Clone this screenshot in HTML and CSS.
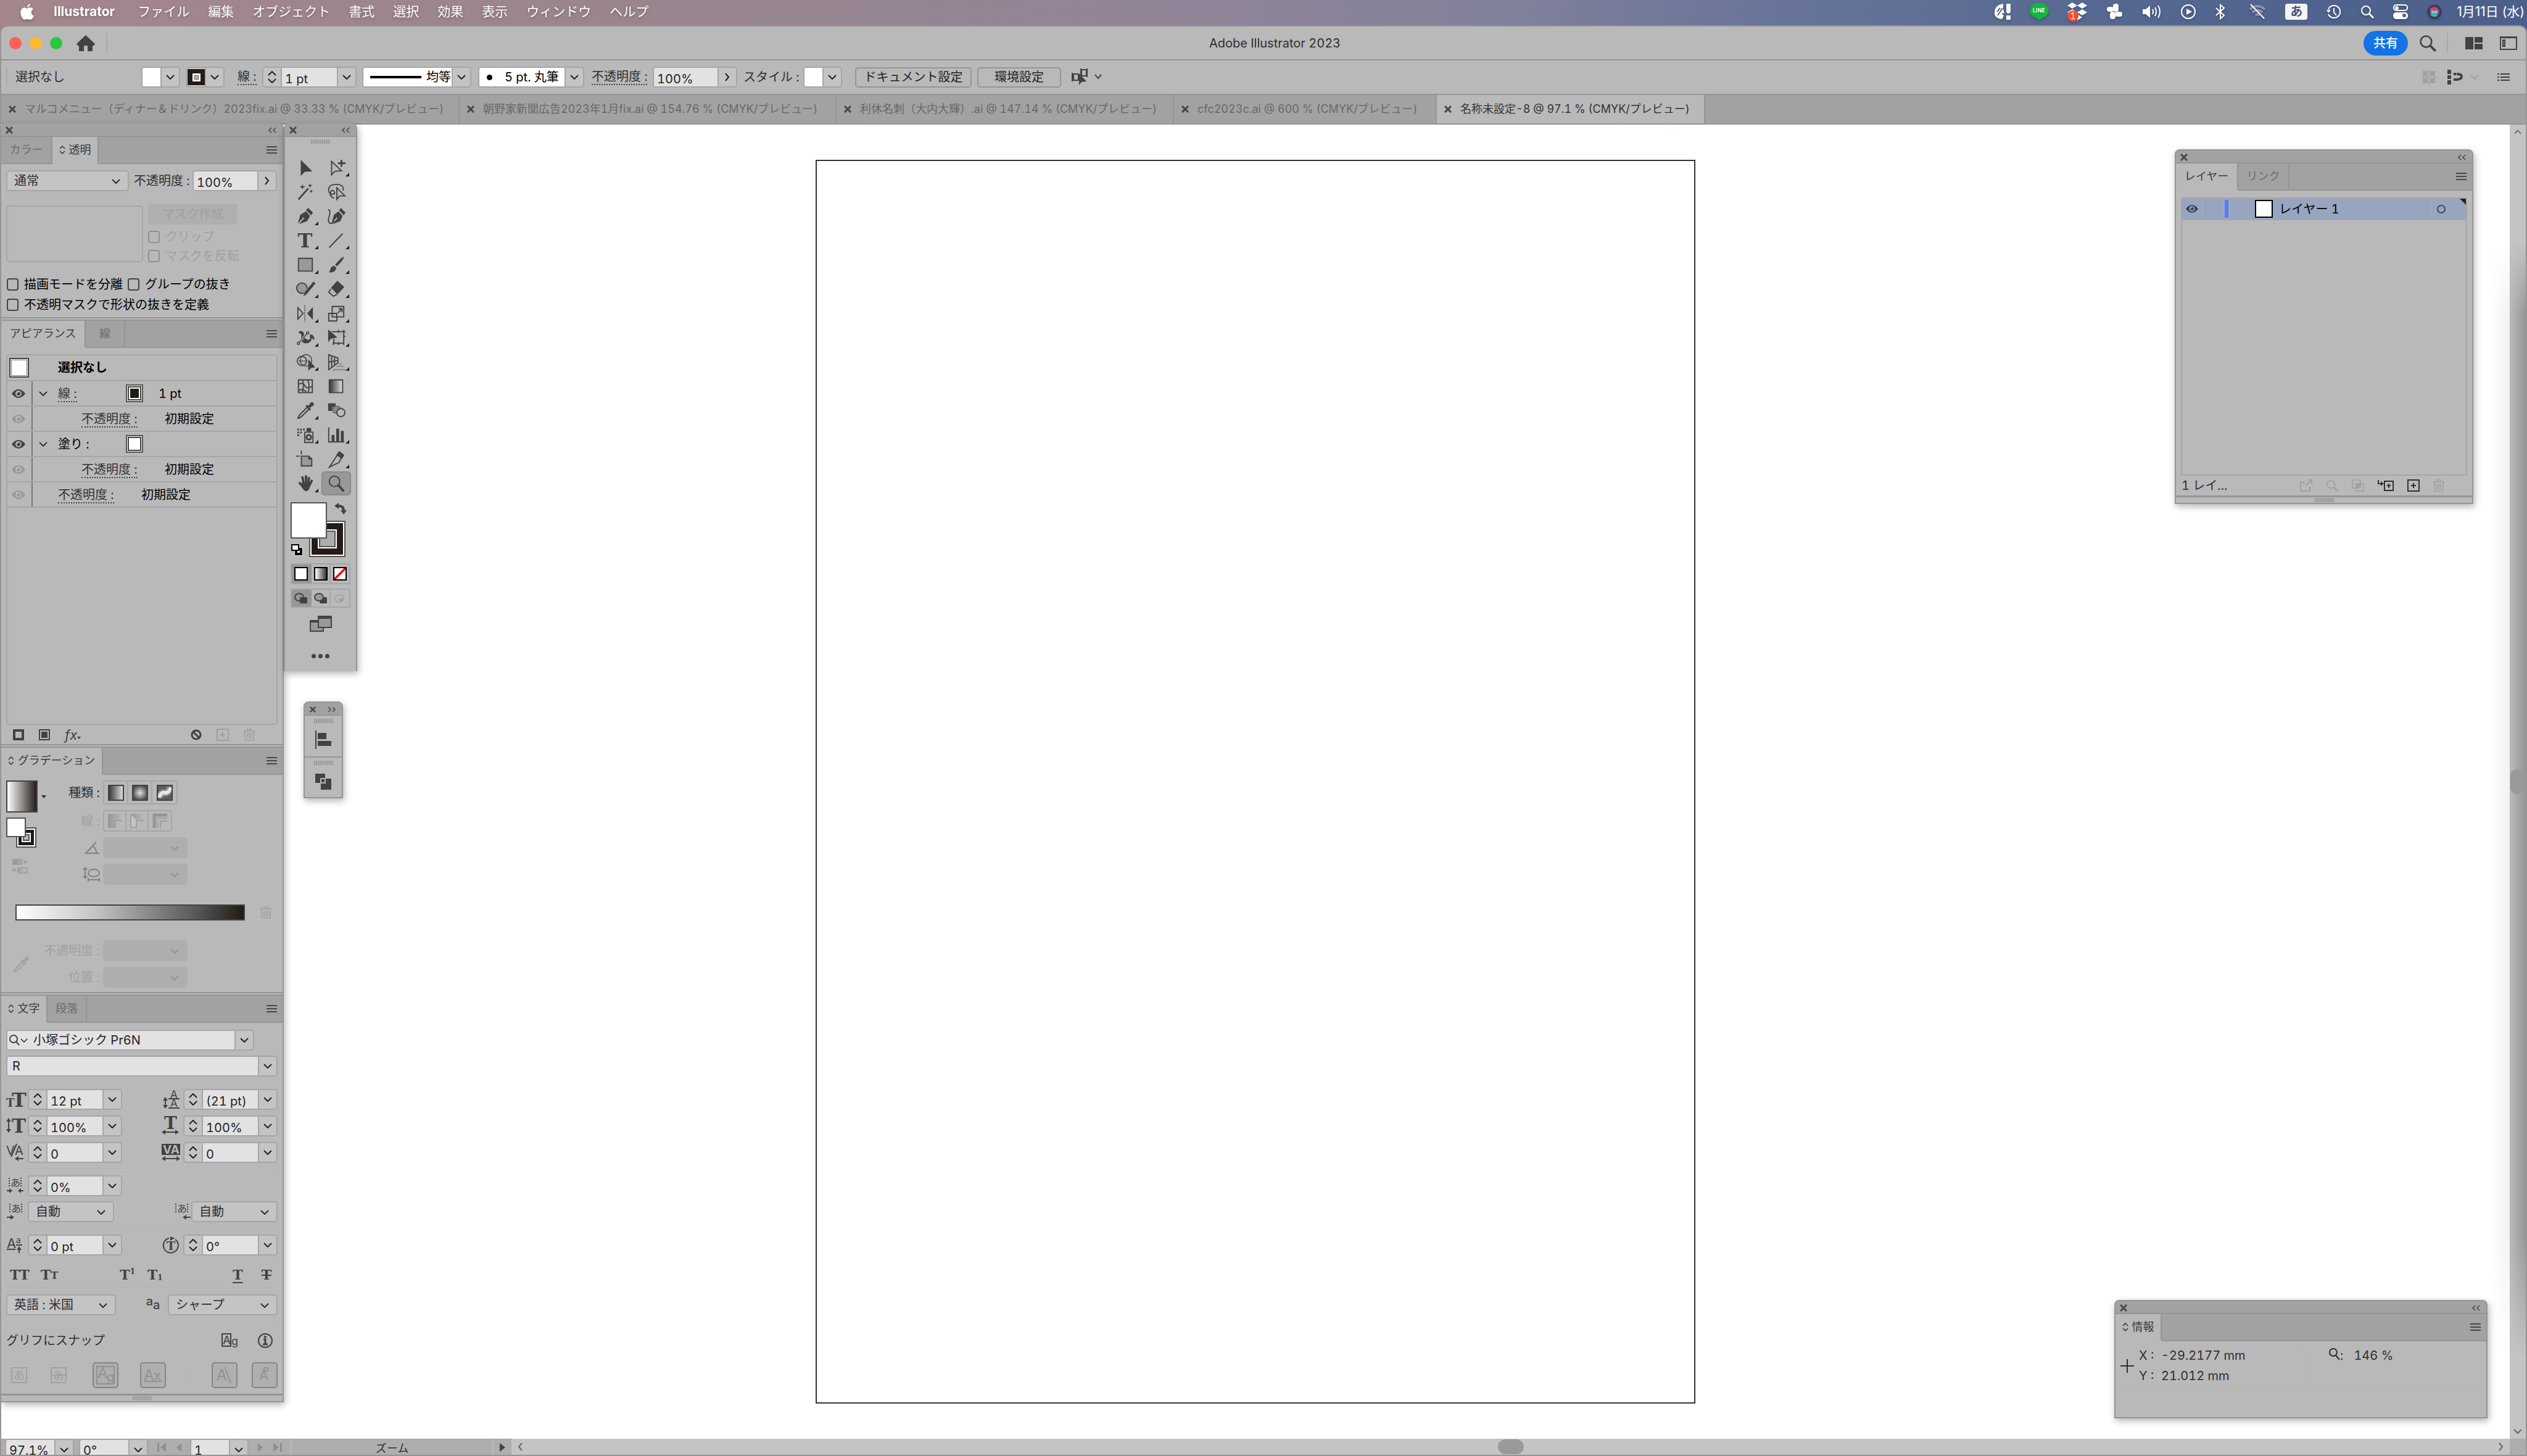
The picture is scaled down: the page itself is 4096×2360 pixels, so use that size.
FILE: index.html
```html
<!DOCTYPE html>
<html lang="ja">
<head>
<meta charset="utf-8">
<title>Adobe Illustrator 2023</title>
<link rel="stylesheet" href="styles.css">
</head>
<body>
<svg class="sprite" aria-hidden="true">
  <defs>
    <linearGradient id="g-bw"><stop offset="0" stop-color="#333"/><stop offset="1" stop-color="#e4e4e4"/></linearGradient>
    <linearGradient id="g-dim"><stop offset="0" stop-color="#969696"/><stop offset="1" stop-color="#bbb"/></linearGradient>
    <radialGradient id="g-rad"><stop offset="0" stop-color="#e2e2e2"/><stop offset="1" stop-color="#505050"/></radialGradient>
    <radialGradient id="g-siri" cx="0.5" cy="0.5"><stop offset="0" stop-color="#fff"/><stop offset="0.35" stop-color="#6fb3d8"/><stop offset="0.7" stop-color="#6a3f72"/><stop offset="1" stop-color="#2b2440"/></radialGradient>
  </defs>
  <symbol id="x" viewBox="0 0 12 12"><path d="M1 1L11 11M11 1L1 11" class="s3"/></symbol>
  <symbol id="dbl-l" viewBox="0 0 14 10"><path d="M5 1L1 5L5 9M12 1L8 5L12 9" class="s1"/></symbol>
  <symbol id="dbl-r" viewBox="0 0 14 10"><path d="M2 1L6 5L2 9M9 1L13 5L9 9" class="s1"/></symbol>
  <symbol id="menu" viewBox="0 0 17 12"><path d="M0 1H17M0 6H17M0 11H17" class="s2"/></symbol>
  <symbol id="down" viewBox="0 0 14 8"><path d="M1 1L7 7L13 1" class="s2"/></symbol>
  <symbol id="up" viewBox="0 0 14 8"><path d="M1 7L7 1L13 7" class="s2"/></symbol>
  <symbol id="right" viewBox="0 0 8 14"><path d="M1 1L6 7L1 13" class="s2"/></symbol>
  <symbol id="left" viewBox="0 0 8 14"><path d="M7 1L2 7L7 13" class="s2"/></symbol>
  <symbol id="updown" viewBox="0 0 10 14"><path d="M1 5L5 1L9 5M1 9L5 13L9 9" class="s1"/></symbol>
  <symbol id="eye" viewBox="0 0 22 14"><path fill="currentColor" fill-rule="evenodd" d="M0 7Q5 0 11 0T22 7Q17 14 11 14T0 7ZM11 2A5 5 0 1 0 11 12A5 5 0 1 0 11 2ZM11 4A3 3 0 1 1 11 10A3 3 0 0 1 8 7Q10 7 11 4Z"/></symbol>
  <symbol id="trash" viewBox="0 0 18 20"><path d="M0 4H18M6 4V1H12V4M2 4V17Q2 19 4 19H14Q16 19 16 17V4M6 7V16M9 7V16M12 7V16" class="s1"/></symbol>
  <symbol id="plusbox" viewBox="0 0 20 20"><path d="M1 1H19V19H1ZM10 6V14M6 10H14" class="s2"/></symbol>
  <symbol id="glass" viewBox="0 0 22 22"><circle cx="9" cy="9" r="7" class="s2"/><path d="M14 14L21 21" class="s3"/></symbol>
  <symbol id="dropper" viewBox="0 0 30 30"><path d="M18 10L6 22Q4 24 3 28Q7 27 9 25L21 13" class="s2"/><path fill="currentColor" d="M15 8L18 6L20 8L23 3Q26 0 28 3T27 8L22 11L24 13L22 16Z"/></symbol>
  <symbol id="curve-arrow" viewBox="0 0 20 20"><path d="M5 5Q15 4 15 13" fill="none" stroke="currentColor" stroke-width="4"/><path fill="currentColor" d="M0 5L7 0V10ZM10 12H20L15 19Z"/></symbol>
</svg>

<header class="menubar">
  <svg width="24" height="28" viewBox="0 0 24 28" class="apple"><path fill="#fff" d="M17 1Q17 5 12 7Q12 3 17 1ZM12 9Q14 7 17 7Q20 7 22 10Q18 12 19 16Q19 19 23 21Q20 27 17 27Q14 26 12 26T8 27Q5 27 2 20Q0 11 5 8Q8 6 12 9Z"/></svg>
  <nav class="menus">
    <a href="#" class="app">Illustrator</a><a href="#">ファイル</a><a href="#">編集</a><a href="#">オブジェクト</a><a href="#">書式</a><a href="#">選択</a><a href="#">効果</a><a href="#">表示</a><a href="#">ウィンドウ</a><a href="#">ヘルプ</a>
  </nav>
  <div class="extras">
    <svg width="28" height="28" viewBox="0 0 28 28"><path fill="#fff" d="M15 1Q2 3 1 14T13 26L16 20L12 17L17 16L15 10ZM20 1H27V13Q26 17 24 17Q20 17 20 13ZM20 20H27V27H20Z"/><path d="M14 8L6 20M10 8L5 14" stroke="#52648d" stroke-width="2"/></svg>
    <svg width="30" height="30" viewBox="0 0 30 30"><path fill="#12b73c" d="M15 1A13 12 0 0 1 20 25L15 29L11 25A13 12 0 0 1 15 1Z"/><text x="15" y="16" class="line-txt">LINE</text></svg>
    <svg width="34" height="32" viewBox="0 0 34 32"><path fill="#fff" d="M9 1L17 6L9 11L1 6ZM25 1L33 6L25 11L17 6ZM9 12L17 17L9 22L1 17ZM25 12L33 17L25 22L17 17ZM17 20L25 25L17 30Z"/><circle cx="10" cy="23" r="9" fill="#fb4a2c"/><text x="10" y="28" class="badge-txt">1</text></svg>
    <svg width="28" height="28" viewBox="0 0 28 28"><g fill="#fff"><rect x="11" y="1" width="9" height="13" rx="4"/><rect x="1" y="6" width="11" height="8" rx="4"/><rect x="14" y="14" width="12" height="8" rx="4"/><rect x="6" y="14" width="9" height="12" rx="4"/></g></svg>
    <svg width="32" height="24" viewBox="0 0 32 24"><path fill="#fff" d="M1 8H6L13 2V22L6 16H1Z"/><path d="M17 8Q19 12 17 16M21 5Q25 12 21 19M26 2Q32 12 26 22" fill="none" stroke="#fff" stroke-width="2"/></svg>
    <svg width="26" height="26" viewBox="0 0 26 26"><circle cx="13" cy="13" r="11" fill="none" stroke="#fff" stroke-width="2"/><path fill="#fff" d="M10 8L19 13L10 18Z"/></svg>
    <svg width="18" height="26" viewBox="0 0 18 26"><path d="M2 7L15 19L9 24V2L15 7L2 19" fill="none" stroke="#fff" stroke-width="2"/></svg>
    <svg width="30" height="26" viewBox="0 0 30 26" class="wifi"><path d="M3 9Q15 -1 27 9M7 14Q15 7 23 14M12 19Q15 15 18 19" fill="none" stroke="#8793b0" stroke-width="4"/><path d="M4 1L26 24" stroke="#fff" stroke-width="2"/></svg>
    <span class="ime">あ</span>
    <svg width="26" height="26" viewBox="0 0 26 26"><path d="M4 9A10 10 0 1 1 4 17M13 7V14L17 19" fill="none" stroke="#fff" stroke-width="2"/><path fill="#fff" d="M1 10H8L4 15Z"/></svg>
    <svg width="22" height="24" viewBox="0 0 22 24"><circle cx="9" cy="10" r="7" fill="none" stroke="#fff" stroke-width="2"/><path d="M14 15L21 22" stroke="#fff" stroke-width="3"/></svg>
    <svg width="26" height="26" viewBox="0 0 26 26"><rect x="2" y="2" width="22" height="9" rx="4" fill="none" stroke="#fff" stroke-width="2"/><circle cx="7" cy="7" r="3" fill="#fff"/><rect x="1" y="14" width="24" height="11" rx="5" fill="#fff"/><circle cx="19" cy="19" r="3" fill="#52648d"/></svg>
    <svg width="24" height="24" viewBox="0 0 24 24"><circle cx="12" cy="12" r="11" fill="url(#g-siri)"/><path d="M4 7Q12 2 18 8L12 12Z" fill="#d9426b"/><path d="M5 17Q10 22 17 19L12 12Z" fill="#2fc0a0"/></svg>
    <time>1月11日 (水)</time>
  </div>
</header>

<div class="window">
  <div class="titlebar">
    <div class="tb-left">
      <button class="light red" aria-label="閉じる"></button><button class="light yellow" aria-label="しまう"></button><button class="light green" aria-label="拡大"></button>
      <button class="home" aria-label="ホーム"><svg width="30" height="26" viewBox="0 0 30 26"><path fill="currentColor" d="M15 0L30 14L28 17H26V26H18V17H12V26H4V17H2L0 14Z"/></svg></button>
      <i class="vbar"></i>
    </div>
    <h1>Adobe Illustrator 2023</h1>
    <div class="tb-right">
      <button class="share">共有</button>
      <button class="plain" aria-label="検索"><svg width="28" height="28"><use href="#glass"/></svg></button>
      <i class="vbar"></i>
      <button class="plain layout" aria-label="ワークスペース"><svg width="28" height="20" viewBox="0 0 28 20"><path fill="currentColor" d="M0 0H13V20H0ZM15 0H28V9H15ZM15 11H28V20H15Z"/></svg></button>
      <button class="plain" aria-label="パネル"><svg width="28" height="22" viewBox="0 0 28 22"><path d="M1 2H27V21H1Z" class="s2"/><path fill="currentColor" d="M0 0H28V3H0ZM4 5H9V17H4Z"/><path d="M5 9H8M5 13H8" stroke="#b9b9b9"/></svg></button>
    </div>
  </div>

  <div class="control">
    <i class="dots"></i>
    <span class="selstate">選択なし</span>
    <button class="combo sw" aria-label="塗り"><span class="paper"></span><span class="dd"><svg width="14" height="8"><use href="#down"/></svg></span></button>
    <button class="combo sw" aria-label="線の色"><span class="ink"><i></i></span><span class="dd"><svg width="14" height="8"><use href="#down"/></svg></span></button>
    <label class="dotted c-stroke" for="c-w">線 :</label>
    <div class="combo w153"><span class="step"><button aria-label="増"><svg width="14" height="8"><use href="#up"/></svg></button><button aria-label="減"><svg width="14" height="8"><use href="#down"/></svg></button></span><input id="c-w" value="1 pt"><button class="dd" aria-label="一覧"><svg width="14" height="8"><use href="#down"/></svg></button></div>
    <button class="combo profile"><span class="paper"><i class="rule"></i>均等</span><span class="dd"><svg width="14" height="8"><use href="#down"/></svg></span></button>
    <button class="combo brush"><span class="paper"><i class="dot"></i>5 pt. 丸筆</span><span class="dd"><svg width="14" height="8"><use href="#down"/></svg></span></button>
    <label class="dotted c-opacity" for="c-o">不透明度 :</label>
    <div class="combo w137"><input id="c-o" value="100%"><button class="dd" aria-label="開く"><svg width="8" height="14"><use href="#right"/></svg></button></div>
    <span class="c-style">スタイル :</span>
    <button class="combo sw" aria-label="スタイル"><span class="paper"></span><span class="dd"><svg width="14" height="8"><use href="#down"/></svg></span></button>
    <button class="outline docset">ドキュメント設定</button>
    <button class="outline prefs">環境設定</button>
    <button class="plain pick" aria-label="類似オブジェクト"><svg width="52" height="28" viewBox="0 0 52 28"><path d="M3 9H11V19H3ZM16 2H24V12H16ZM1 7V21M15 0V14M25 0V14" class="s2"/><path fill="currentColor" d="M12 8V27L16 22L24 21Z"/><path d="M38 10L43 16L48 10" class="s2"/></svg></button>
    <div class="c-right">
      <svg width="26" height="26" viewBox="0 0 26 26" class="dim"><path fill="currentColor" d="M3 3H11V11H3ZM15 3H23V11H15ZM3 15H11V23H3ZM15 15H23V23H15Z"/><path d="M13 0V26M0 13H26" class="s1"/></svg>
      <svg width="26" height="24" viewBox="0 0 26 24" class="magnet"><path fill="currentColor" d="M0 0H6V7H0ZM0 9H6V15H0ZM0 17H6V24H0Z"/><path d="M10 7H16Q23 7 23 11T16 16H10" fill="none" stroke="currentColor" stroke-width="4" stroke-dasharray="4 1 40"/></svg>
      <svg width="14" height="8" class="dim more-dd"><use href="#down"/></svg>
      <svg width="20" height="14" viewBox="0 0 20 14" class="lines"><path d="M0 2H3M5 2H20M0 7H3M5 7H20M0 12H3M5 12H20" class="s2"/></svg>
    </div>
  </div>

  <nav class="doctabs">
    <a href="#" class="t1"><svg width="12" height="12"><use href="#x"/></svg>マルコメニュー（ディナー＆ドリンク）2023fix.ai @ 33.33 % (CMYK/プレビュー)</a>
    <a href="#" class="t2"><svg width="12" height="12"><use href="#x"/></svg>朝野家新聞広告2023年1月fix.ai @ 154.76 % (CMYK/プレビュー)</a>
    <a href="#" class="t3"><svg width="12" height="12"><use href="#x"/></svg>利休名刺（大内大輝）.ai @ 147.14 % (CMYK/プレビュー)</a>
    <a href="#" class="t4"><svg width="12" height="12"><use href="#x"/></svg>cfc2023c.ai @ 600 % (CMYK/プレビュー)</a>
    <a href="#" class="t5 on"><svg width="12" height="12"><use href="#x"/></svg>名称未設定-8 @ 97.1 % (CMYK/プレビュー)</a>
  </nav>

  <main class="workspace">
    <div class="canvas"><div class="artboard"></div></div>
    <div class="vscroll"><svg width="12" height="8"><use href="#up"/></svg><i></i><svg width="14" height="8"><use href="#down"/></svg></div>
    <div class="edge"></div>

    <aside class="panel dock">
      <div class="pbar"><button aria-label="閉じる"><svg width="12" height="12"><use href="#x"/></svg></button><button aria-label="折りたたむ"><svg width="14" height="10"><use href="#dbl-l"/></svg></button></div>
      <section class="sec first">
        <div class="tabs"><button class="tab-m">カラー</button><button class="on tab-i"><svg width="10" height="14"><use href="#updown"/></svg>透明</button><span class="fill"><svg width="17" height="12"><use href="#menu"/></svg></span></div>
        <div class="body transp">
          <div class="row">
            <span class="select w199"><select aria-label="描画モード"><option>通常</option></select><svg width="14" height="8"><use href="#down"/></svg></span>
            <label class="oplab" for="t-o">不透明度 :</label>
            <div class="combo w137"><input id="t-o" value="100%"><button class="dd" aria-label="開く"><svg width="8" height="14"><use href="#right"/></svg></button></div>
          </div>
          <hr>
          <div class="mask">
            <div class="preview"></div>
            <div class="maskcol">
              <button class="flat" disabled>マスク作成</button>
              <label class="chk off"><input type="checkbox" disabled>クリップ</label>
              <label class="chk off"><input type="checkbox" disabled>マスクを反転</label>
            </div>
          </div>
          <hr>
          <div class="checks"><label class="chk"><input type="checkbox">描画モードを分離</label><label class="chk"><input type="checkbox">グループの抜き</label></div>
          <div class="checks"><label class="chk"><input type="checkbox">不透明マスクで形状の抜きを定義</label></div>
        </div>
      </section>

      <section class="sec">
        <div class="tabs"><button class="on tab-l">アピアランス</button><button class="tab-s">線</button><span class="fill"><svg width="17" height="12"><use href="#menu"/></svg></span></div>
        <div class="body appear">
          <ul class="alist">
            <li class="head"><span class="thumb"><i></i></span><b>選択なし</b></li>
            <li><span class="eye"><svg width="22" height="14"><use href="#eye"/></svg></span><span class="tw"><svg width="14" height="8"><use href="#down"/></svg></span><span class="lab"><a href="#" class="dotted">線 :</a></span><span class="chip black"></span><span class="val">1 pt</span></li>
            <li><span class="eye pale"><svg width="22" height="14"><use href="#eye"/></svg></span><span class="tw deep"></span><span class="lab2"><a href="#" class="dotted">不透明度 :</a></span>初期設定</li>
            <li><span class="eye"><svg width="22" height="14"><use href="#eye"/></svg></span><span class="tw"><svg width="14" height="8"><use href="#down"/></svg></span><span class="lab">塗り :</span><span class="chip"></span></li>
            <li><span class="eye pale"><svg width="22" height="14"><use href="#eye"/></svg></span><span class="tw deep"></span><span class="lab2"><a href="#" class="dotted">不透明度 :</a></span>初期設定</li>
            <li><span class="eye pale"><svg width="22" height="14"><use href="#eye"/></svg></span><span class="tw"></span><span class="lab2"><a href="#" class="dotted">不透明度 :</a></span>初期設定</li>
          </ul>
          <div class="afoot">
            <button class="plain" aria-label="新規線"><svg width="18" height="18" viewBox="0 0 18 18"><path d="M2 2H16V16H2Z" fill="none" stroke="currentColor" stroke-width="4"/></svg></button>
            <button class="plain" aria-label="新規塗り"><svg width="18" height="18" viewBox="0 0 18 18"><path d="M1 1H17V17H1Z" class="s2"/><path d="M4 4H14V14H4Z" fill="currentColor"/></svg></button>
            <button class="plain fx">fx<i></i></button>
            <button class="plain push" aria-label="消去"><svg width="18" height="18" viewBox="0 0 18 18"><circle cx="9" cy="9" r="7" class="s3"/><path d="M4 4L14 14" class="s3"/></svg></button>
            <button class="plain dim" aria-label="複製"><svg width="20" height="20"><use href="#plusbox"/></svg></button>
            <button class="plain dim" aria-label="削除"><svg width="18" height="20"><use href="#trash"/></svg></button>
          </div>
        </div>
      </section>

      <section class="sec">
        <div class="tabs"><button class="on tab-xl"><svg width="10" height="14"><use href="#updown"/></svg>グラデーション</button><span class="fill"><svg width="17" height="12"><use href="#menu"/></svg></span></div>
        <div class="body grad">
          <div class="gtop">
            <div class="gleft">
              <div class="row"><span class="gsw"></span><i class="tri"></i></div>
              <div class="fs"><span class="fs-stroke"></span><span class="fs-fill"></span></div>
              <svg width="28" height="24" viewBox="0 0 28 24" class="dim"><path d="M3 1H17V9H3ZM11 15H26V23H11Z" fill="url(#g-dim)" stroke="currentColor" stroke-width="2"/><path fill="currentColor" d="M19 3H28L23 9ZM0 20H9L5 14Z"/></svg>
            </div>
            <div class="gright">
              <div class="grow"><span class="glab">種類 :</span><div class="seg big">
                <button aria-label="線形"><svg width="26" height="26" viewBox="0 0 26 26"><path d="M1 1H25V25H1Z" fill="url(#g-bw)" stroke="#424242" stroke-width="2"/></svg></button>
                <button aria-label="円形"><svg width="26" height="26" viewBox="0 0 26 26"><path d="M1 1H25V25H1Z" fill="url(#g-rad)" stroke="#424242" stroke-width="2"/></svg></button>
                <button aria-label="フリー"><svg width="26" height="26" viewBox="0 0 26 26"><path d="M1 1H25V25H1Z" fill="#5c5c5c"/><path d="M6 17Q8 12 13 13T20 8" fill="none" stroke="#8d8d8d" stroke-width="11" stroke-linecap="round"/><path d="M5 18Q8 12 13 13T22 7" fill="none" stroke="#e6e6e6" stroke-width="6" stroke-linecap="round"/><path d="M1 1H25V25H1Z" fill="none" stroke="#424242" stroke-width="2"/></svg></button></div></div>
              <div class="grow"><span class="glab off">線 :</span><div class="seg">
                <button disabled aria-label="線1"><svg width="23" height="23" viewBox="0 0 23 23"><path d="M0 0H23V11H12V23H0Z" fill="url(#g-dim)"/><path d="M23 11H12V23" fill="none" stroke="#a0a0a0" stroke-width="2"/></svg></button>
                <button disabled aria-label="線2"><svg width="23" height="23" viewBox="0 0 23 23"><path d="M0 0H23V11H11Z" fill="url(#g-dim)"/><path d="M0 1V23H11V11Z" fill="#c4c4c4"/><path d="M1 2V22H10V11H23" fill="none" stroke="#a0a0a0" stroke-width="2"/></svg></button>
                <button disabled aria-label="線3"><svg width="23" height="23" viewBox="0 0 23 23"><path d="M2 23V2H23" fill="none" stroke="#969696" stroke-width="5"/><path d="M7 23V7H23" fill="none" stroke="#a9a9a9" stroke-width="3"/><path d="M12 23V12H23" fill="none" stroke="#a0a0a0" stroke-width="2"/></svg></button></div></div>
              <div class="grow"><span class="glab mid"><svg width="24" height="20" viewBox="0 0 24 20"><path d="M18 1L1 19H23M12 7Q18 11 18 18" class="s2"/></svg></span><span class="select void"><select disabled aria-label="角度"></select><svg width="14" height="8"><use href="#down"/></svg></span></div>
              <div class="grow"><span class="glab mid"><svg width="28" height="24" viewBox="0 0 28 24"><path d="M4 3V17M9 21H27M9 18V24M27 18V24" class="s2"/><ellipse cx="18" cy="10" rx="9" ry="6" class="s2"/><path fill="currentColor" d="M0 5L4 0L8 5ZM0 15H8L4 20Z"/></svg></span><span class="select void"><select disabled aria-label="縦横比"></select><svg width="14" height="8"><use href="#down"/></svg></span></div>
            </div>
          </div>
          <div class="gbarrow"><div class="gbar"></div><svg width="18" height="20" class="dim"><use href="#trash"/></svg></div>
          <div class="gbot">
            <svg width="28" height="28" class="dim"><use href="#dropper"/></svg>
            <div class="gright">
              <div class="grow"><label class="glab off" for="g-o">不透明度 :</label><span class="select void"><select id="g-o" disabled></select><svg width="14" height="8"><use href="#down"/></svg></span></div>
              <div class="grow"><label class="glab off" for="g-p">位置 :</label><span class="select void"><select id="g-p" disabled></select><svg width="14" height="8"><use href="#down"/></svg></span></div>
            </div>
          </div>
        </div>
      </section>

      <section class="sec last">
        <div class="tabs"><button class="on tab-i"><svg width="10" height="14"><use href="#updown"/></svg>文字</button><button class="tab-s">段落</button><span class="fill"><svg width="17" height="12"><use href="#menu"/></svg></span></div>
        <div class="body chars">
          <div class="combo font"><span class="find"><svg width="18" height="20" viewBox="0 0 18 20"><circle cx="8" cy="8" r="6" class="s2"/><path d="M12 12L17 18" class="s2"/></svg><svg width="12" height="7" viewBox="0 0 14 8"><path d="M1 1L7 7L13 1" class="s2"/></svg></span><input aria-label="フォント" value="小塚ゴシック Pr6N"><button class="dd" aria-label="一覧"><svg width="14" height="8"><use href="#down"/></svg></button></div>
          <div class="combo style"><input aria-label="スタイル" value="R"><button class="dd" aria-label="一覧"><svg width="14" height="8"><use href="#down"/></svg></button></div>
          <hr>
          <div class="crow">
            <span class="ci"><svg width="30" height="26" viewBox="0 0 30 26"><text x="0" y="25" class="slab" font-size="18">T</text><text x="9" y="25" class="slab" font-size="32">T</text></svg></span>
            <div class="combo w153"><span class="step"><button aria-label="増"><svg width="14" height="8"><use href="#up"/></svg></button><button aria-label="減"><svg width="14" height="8"><use href="#down"/></svg></button></span><input aria-label="サイズ" value="12 pt"><button class="dd" aria-label="一覧"><svg width="14" height="8"><use href="#down"/></svg></button></div>
            <span class="ci r"><svg width="30" height="30" viewBox="0 0 30 30"><path d="M6 15V27M11 14H29M11 29H29" class="s2"/><path fill="currentColor" d="M2 17L6 11L10 17ZM2 24H10L6 30Z"/><text x="14" y="13" font-size="17">A</text><text x="14" y="27" font-size="17">A</text></svg></span>
            <div class="combo w153"><span class="step"><button aria-label="増"><svg width="14" height="8"><use href="#up"/></svg></button><button aria-label="減"><svg width="14" height="8"><use href="#down"/></svg></button></span><input aria-label="行送り" value="(21 pt)"><button class="dd" aria-label="一覧"><svg width="14" height="8"><use href="#down"/></svg></button></div>
          </div>
          <div class="crow">
            <span class="ci"><svg width="30" height="26" viewBox="0 0 30 26"><path d="M4 4V20" class="s2"/><path fill="currentColor" d="M0 6L4 0L8 6ZM0 18H8L4 24Z"/><text x="9" y="24" class="slab" font-size="31">T</text></svg></span>
            <div class="combo w153"><span class="step"><button aria-label="増"><svg width="14" height="8"><use href="#up"/></svg></button><button aria-label="減"><svg width="14" height="8"><use href="#down"/></svg></button></span><input aria-label="垂直比率" value="100%"><button class="dd" aria-label="一覧"><svg width="14" height="8"><use href="#down"/></svg></button></div>
            <span class="ci r"><svg width="30" height="30" viewBox="0 0 30 30"><text x="4" y="20" class="slab" font-size="28">T</text><path d="M4 25H24" class="s2"/><path fill="currentColor" d="M0 25L6 21V29ZM28 25L22 21V29Z"/></svg></span>
            <div class="combo w153"><span class="step"><button aria-label="増"><svg width="14" height="8"><use href="#up"/></svg></button><button aria-label="減"><svg width="14" height="8"><use href="#down"/></svg></button></span><input aria-label="水平比率" value="100%"><button class="dd" aria-label="一覧"><svg width="14" height="8"><use href="#down"/></svg></button></div>
          </div>
          <div class="crow">
            <span class="ci"><svg width="30" height="28" viewBox="0 0 30 28"><text x="0" y="18" font-size="20">V</text><text x="14" y="18" font-size="20">A</text><path d="M17 0L8 21M18 24H28" class="s2"/><path fill="currentColor" d="M14 24L20 20V28Z"/></svg></span>
            <div class="combo w153"><span class="step"><button aria-label="増"><svg width="14" height="8"><use href="#up"/></svg></button><button aria-label="減"><svg width="14" height="8"><use href="#down"/></svg></button></span><input aria-label="カーニング" value="0"><button class="dd" aria-label="一覧"><svg width="14" height="8"><use href="#down"/></svg></button></div>
            <span class="ci r"><svg width="30" height="28" viewBox="0 0 30 28"><path fill="currentColor" d="M0 0H30V18H0ZM0 24L6 20V28ZM30 24L24 20V28Z"/><path d="M4 24H26" class="s2"/><text x="2" y="16" font-size="19" class="inv">VA</text></svg></span>
            <div class="combo w153"><span class="step"><button aria-label="増"><svg width="14" height="8"><use href="#up"/></svg></button><button aria-label="減"><svg width="14" height="8"><use href="#down"/></svg></button></span><input aria-label="トラッキング" value="0"><button class="dd" aria-label="一覧"><svg width="14" height="8"><use href="#down"/></svg></button></div>
          </div>
          <hr>
          <div class="crow">
            <span class="ci"><svg width="30" height="26" viewBox="0 0 30 26"><path d="M5 0V16M24 0V16" class="s2" stroke-dasharray="2 2"/><path d="M1 21H7M22 21H28" class="s2"/><path fill="currentColor" d="M5 17L10 21L5 25ZM24 17L19 21L24 25Z"/><text x="7" y="14" font-size="16">あ</text></svg></span>
            <div class="combo w153"><span class="step"><button aria-label="増"><svg width="14" height="8"><use href="#up"/></svg></button><button aria-label="減"><svg width="14" height="8"><use href="#down"/></svg></button></span><input aria-label="文字ツメ" value="0%"><button class="dd" aria-label="一覧"><svg width="14" height="8"><use href="#down"/></svg></button></div>
          </div>
          <div class="crow tight">
            <span class="ci"><svg width="30" height="26" viewBox="0 0 30 26"><path d="M6 0V16M25 0V16" class="s2" stroke-dasharray="2 2"/><path d="M1 22H8" class="s2"/><path fill="currentColor" d="M7 18L13 22L7 26Z"/><text x="8" y="14" font-size="16">あ</text></svg></span>
            <span class="select w140"><select aria-label="左アキ"><option>自動</option></select><svg width="14" height="8"><use href="#down"/></svg></span>
            <span class="ci r narrow"><svg width="26" height="26" viewBox="0 0 26 26"><path d="M1 0V16M20 0V16" class="s2" stroke-dasharray="2 2"/><path d="M17 22H25" class="s2"/><path fill="currentColor" d="M18 18L12 22L18 26Z"/><text x="3" y="14" font-size="16">あ</text></svg></span>
            <span class="select w140"><select aria-label="右アキ"><option>自動</option></select><svg width="14" height="8"><use href="#down"/></svg></span>
          </div>
          <hr>
          <div class="crow">
            <span class="ci"><svg width="30" height="26" viewBox="0 0 30 26"><text x="1" y="18" font-size="22">A</text><text x="16" y="10" font-size="14">a</text><path d="M1 20H15M16 13H26M21 17V26" class="s2"/><path fill="currentColor" d="M17 21L21 15L25 21Z"/></svg></span>
            <div class="combo w153"><span class="step"><button aria-label="増"><svg width="14" height="8"><use href="#up"/></svg></button><button aria-label="減"><svg width="14" height="8"><use href="#down"/></svg></button></span><input aria-label="ベースラインシフト" value="0 pt"><button class="dd" aria-label="一覧"><svg width="14" height="8"><use href="#down"/></svg></button></div>
            <span class="ci r"><svg width="30" height="28" viewBox="0 0 30 28"><path d="M12 3A12 12 0 1 0 22 5" class="s2"/><path fill="currentColor" d="M14 0L21 3L14 7Z"/><text x="8" y="22" class="slab" font-size="19">T</text></svg></span>
            <div class="combo w153"><span class="step"><button aria-label="増"><svg width="14" height="8"><use href="#up"/></svg></button><button aria-label="減"><svg width="14" height="8"><use href="#down"/></svg></button></span><input aria-label="文字回転" value="0°"><button class="dd" aria-label="一覧"><svg width="14" height="8"><use href="#down"/></svg></button></div>
          </div>
          <hr>
          <div class="caps">
            <button>TT</button><button class="b2">T<small>T</small></button><button class="b3">T<sup>1</sup></button><button class="b4">T<sub>1</sub></button><button class="b5 under">T</button><button class="b6 strike">T</button>
          </div>
          <hr>
          <div class="row lang">
            <span class="select w178"><select aria-label="言語"><option>英語 : 米国</option></select><svg width="14" height="8"><use href="#down"/></svg></span>
            <label class="aa" for="aa">a<sub>a</sub></label>
            <span class="select w178"><select id="aa"><option>シャープ</option></select><svg width="14" height="8"><use href="#down"/></svg></span>
          </div>
          <hr>
          <div class="snap"><span>グリフにスナップ</span><svg width="30" height="26" viewBox="0 0 30 26"><path d="M1 2H15V22H1Z" class="s2"/><text x="2" y="19" font-size="19">A</text><text x="16" y="20" font-size="18">g</text></svg><svg width="24" height="24" viewBox="0 0 24 24" class="info"><circle cx="12" cy="12" r="11" class="s2"/><circle cx="12" cy="6" r="2" fill="currentColor"/><path d="M9 10H12V17M8 18H16" class="s3"/></svg></div>
          <div class="glyphs">
            <button class="bare"><span>あ</span></button>
            <button class="bare cut"><span>あ</span></button>
            <button class="boxed"><svg width="30" height="30" viewBox="0 0 30 30"><path d="M1 1H29V29H1Z" class="s2"/><text x="2" y="20" font-size="24">A</text><text x="17" y="25" font-size="20">g</text></svg></button>
            <button class="boxed x2"><svg width="30" height="30" viewBox="0 0 30 30"><path d="M1 25H29" class="s2"/><text x="0" y="23" font-size="24">A</text><text x="16" y="23" font-size="22">x</text></svg></button>
            <i></i>
            <button class="boxed"><svg width="30" height="30" viewBox="0 0 30 30"><text x="2" y="23" font-size="24">A</text><path d="M15 2L25 28" class="s2"/></svg></button>
            <button class="boxed x3"><svg width="30" height="30" viewBox="0 0 30 30"><text x="6" y="23" font-size="22">A</text><path d="M14 3H20V8H14Z" class="s2"/></svg></button>
          </div>
        </div>
      </section>
      <div class="gripbar"><i class="grip"></i></div>
    </aside>

    <aside class="panel toolbox">
      <div class="pbar"><button aria-label="閉じる"><svg width="12" height="12"><use href="#x"/></svg></button><button aria-label="折りたたむ"><svg width="14" height="10"><use href="#dbl-l"/></svg></button></div>
      <i class="grip"></i>
      <div class="tools">
        <button aria-label="選択"><svg viewBox="0 0 32 32"><path fill="currentColor" d="M8 2V30L15 23L28 22Z"/></svg></button>
        <button aria-label="ダイレクト選択" class="fly"><svg viewBox="0 0 32 32"><path d="M8 5V28L14 22L25 21Z" class="s2"/><path d="M19 8H32M25 2V14" class="s3"/></svg></button>
        <button aria-label="自動選択"><svg viewBox="0 0 32 32"><path d="M4 29L21 10" class="s3"/><path fill="currentColor" d="M11 2L12 6L16 7L12 9L11 12L10 9L6 7L10 6ZM24 1L25 4L28 5L25 6L24 9L23 6L20 5L23 4ZM26 12L27 14L29 15L27 16L26 18L25 16L23 15L25 14Z"/></svg></button>
        <button aria-label="なげなわ"><svg viewBox="0 0 32 32"><path d="M28 14Q30 3 16 3T3 14Q4 21 10 20T12 15T6 17T12 27" class="s2"/><path d="M17 9V29L22 23H31Z" fill="#b9b9b9" stroke="currentColor" stroke-width="2"/></svg></button>
        <button aria-label="ペン" class="fly"><svg viewBox="0 0 32 32"><path fill="currentColor" d="M3 29L7 14L17 8L24 16L19 25L5 30L14 20L13 18ZM17 6L21 2L29 10L26 15Z"/></svg></button>
        <button aria-label="曲線"><svg viewBox="0 0 32 32"><path d="M2 5Q7 6 4 16T4 28Q8 31 13 25" class="s2"/><path fill="currentColor" d="M8 29L12 14L20 8L27 16L23 25L10 30L18 20L17 18ZM21 6L24 2L32 10L29 15Z"/></svg></button>
        <button aria-label="文字" class="fly slabT">T</button>
        <button aria-label="直線" class="fly"><svg viewBox="0 0 32 32"><path d="M4 28L27 4" class="s2"/></svg></button>
        <button aria-label="長方形" class="fly"><svg viewBox="0 0 32 32"><path d="M4 5H28V27H4Z" fill="#999" stroke="currentColor" stroke-width="2"/></svg></button>
        <button aria-label="ブラシ" class="fly"><svg viewBox="0 0 32 32"><path fill="currentColor" d="M29 2Q30 6 17 19L14 16Q25 3 29 2ZM12 18Q16 19 16 23Q13 31 3 29Q6 27 6 23Q8 18 12 18Z"/></svg></button>
        <button aria-label="Shaper" class="fly"><svg viewBox="0 0 32 32"><circle cx="10" cy="15" r="9" fill="#999" stroke="currentColor" stroke-width="2"/><path fill="currentColor" stroke="#b9b9b9" d="M30 3L34 7L18 26L12 30L14 22Z"/></svg></button>
        <button aria-label="消しゴム" class="fly"><svg viewBox="0 0 32 32"><path fill="currentColor" d="M18 2L30 13L18 26L7 14Z"/><path d="M7 16L3 22L11 29L17 26" class="s2"/></svg></button>
        <button aria-label="リフレクト" class="fly"><svg viewBox="0 0 32 32"><path d="M3 6V26L12 16Z" class="s2"/><path fill="currentColor" d="M29 5V27L19 16Z"/><path d="M15 2V31" class="s2" stroke-dasharray="2 2"/></svg></button>
        <button aria-label="拡大・縮小" class="fly"><svg viewBox="0 0 32 32"><path d="M9 4H29V22H9ZM3 16H17V29H3ZM19 15L26 8M20 8H26V14" class="s2"/></svg></button>
        <button aria-label="線幅" class="fly"><svg viewBox="0 0 32 32"><path fill="currentColor" d="M5 5Q14 3 14 13Q16 20 22 20Q26 18 23 13Q28 6 32 19L29 20Q28 16 27 17Q26 27 15 26Q6 24 9 16Q10 8 5 9Z"/><path d="M5 25L19 9" stroke="#b9b9b9" stroke-width="4"/><path d="M5 25L19 9" class="s1"/><circle cx="4" cy="26" r="2" class="s1"/><circle cx="20" cy="8" r="2" class="s1"/></svg></button>
        <button aria-label="自由変形" class="fly"><svg viewBox="0 0 32 32"><path d="M10 6H29V26H12V18M8 6H13M20 3V8M29 3V9M29 14H32M29 24V29M20 24V29M11 24V29M27 6H32" class="s2"/><path fill="currentColor" d="M2 2V24L7 18L18 16Z"/></svg></button>
        <button aria-label="シェイプ形成" class="fly"><svg viewBox="0 0 32 32"><circle cx="17" cy="13" r="10" class="s1"/><circle cx="10" cy="14" r="8" class="s2"/><path d="M5 14H20" class="s2" stroke-dasharray="2 1"/><path fill="currentColor" d="M21 11V31L26 26L33 25Z"/></svg></button>
        <button aria-label="遠近グリッド" class="fly"><svg viewBox="0 0 32 32"><path d="M3 3V29L19 17V9ZM8 5V25M13 7V21M3 16L19 13" class="s2"/><path d="M20 19H26M16 23H29M10 29H32" stroke="#888" stroke-width="2"/></svg></button>
        <button aria-label="メッシュ"><svg viewBox="0 0 32 32"><path d="M4 5H28V27H4ZM4 13Q12 8 15 15T28 16M4 24Q12 18 18 27M11 5Q14 12 11 27M20 5Q24 14 21 27" class="s2"/></svg></button>
        <button aria-label="グラデーション"><svg viewBox="0 0 32 32"><path d="M4 5H27V27H4Z" fill="url(#g-bw)" stroke="currentColor" stroke-width="2"/></svg></button>
        <button aria-label="スポイト" class="fly"><svg viewBox="0 0 30 30"><use href="#dropper"/></svg></button>
        <button aria-label="ブレンド"><svg viewBox="0 0 32 32"><path fill="currentColor" d="M2 4H15V8L9 11V17H2Z"/><rect x="10" y="9" width="13" height="12" rx="4" fill="#888" stroke="currentColor"/><circle cx="24" cy="20" r="7" fill="#b9b9b9" stroke="currentColor" stroke-width="2"/></svg></button>
        <button aria-label="シンボルスプレー" class="fly"><svg viewBox="0 0 32 32"><path d="M15 11H29V29H15Z" class="s2"/><circle cx="22" cy="20" r="4" class="s3"/><path fill="currentColor" d="M18 4H26V10H18ZM2 5H5V8H2ZM7 5H10V8H7ZM12 5H15V8H12ZM2 10H5V13H2ZM7 10H10V13H7ZM2 15H5V18H2Z"/></svg></button>
        <button aria-label="グラフ" class="fly"><svg viewBox="0 0 32 32"><path d="M3 3V28H30" class="s2"/><path fill="currentColor" d="M8 16H13V28H8ZM16 5H21V28H16ZM24 9H29V28H24Z"/></svg></button>
        <button aria-label="アートボード"><svg viewBox="0 0 32 32"><path d="M9 11H22L27 16V28H9Z" fill="#999" stroke="currentColor" stroke-width="2"/><path fill="currentColor" d="M21 10L28 17H21Z"/><path d="M9 1V8M0 11H6" class="s2"/></svg></button>
        <button aria-label="スライス" class="fly"><svg viewBox="0 0 32 32"><path d="M18 9L4 30L21 22L25 13" class="s2"/><path fill="currentColor" d="M21 2L30 9L26 16L16 9Z"/></svg></button>
        <button aria-label="手のひら" class="fly"><svg viewBox="0 0 32 32"><path d="M11 6L13 17M17 4V16M22 7L21 17M27 12L23 20M6 16L12 22" fill="none" stroke="currentColor" stroke-width="4" stroke-linecap="round"/><path fill="currentColor" d="M10 15H24L24 22Q22 30 17 30Q13 30 8 20Z"/></svg></button>
        <button aria-label="ズーム" class="picked"><svg viewBox="0 0 32 32"><circle cx="13" cy="13" r="9" class="s2"/><path d="M20 20L28 29" fill="none" stroke="currentColor" stroke-width="4" stroke-linecap="round"/></svg></button>
      </div>
      <div class="paint">
        <span class="p-stroke"></span><span class="p-fill"></span>
        <svg class="p-swap" width="20" height="20"><use href="#curve-arrow"/></svg>
        <svg class="p-def" width="20" height="20" viewBox="0 0 20 20"><path d="M6 6H20V20H6Z" fill="#eee"/><path d="M9 9H17V17H9Z" fill="#fff" stroke="#000" stroke-width="4"/><path d="M2 2H13V11H2Z" fill="#fff" stroke="#000" stroke-width="2"/></svg>
      </div>
      <div class="tri-seg"><button class="on"><i class="mini white"></i></button><button><i class="mini gr"></i></button><button><i class="mini none"></i></button></div>
      <div class="tri-seg short">
        <button class="on"><svg width="22" height="18" viewBox="0 0 22 18"><ellipse cx="8" cy="7" rx="7" ry="6" class="s2"/><rect x="9" y="7" width="12" height="10" rx="1" fill="currentColor"/></svg></button>
        <button><svg width="22" height="18" viewBox="0 0 22 18"><rect x="9" y="7" width="12" height="10" rx="1" fill="currentColor"/><ellipse cx="8" cy="7" rx="7" ry="6" fill="#999" stroke="currentColor" stroke-width="2"/></svg></button>
        <button class="dim"><svg width="18" height="16" viewBox="0 0 18 16"><ellipse cx="8" cy="8" rx="7" ry="6" class="s1"/><path fill="currentColor" d="M8 8H15Q14 14 8 14Z"/></svg></button>
      </div>
      <button class="screens" aria-label="スクリーンモード"><svg width="36" height="26" viewBox="0 0 36 26"><path d="M1 8H22V25H1Z" fill="#999" stroke="currentColor" stroke-width="2"/><path d="M0 7H22V11H0Z" fill="currentColor"/><path d="M14 2H35V19H14Z" fill="#999" stroke="currentColor" stroke-width="2"/><path d="M13 0H36V5H13Z" fill="currentColor"/></svg></button>
      <button class="more" aria-label="ツールバーを編集"><i></i><i></i><i></i></button>
    </aside>

    <aside class="panel mini-dock">
      <div class="pbar"><button aria-label="閉じる"><svg width="12" height="10" viewBox="0 0 12 12"><path d="M1 1L11 11M11 1L1 11" class="s3"/></svg></button><button aria-label="展開"><svg width="14" height="10"><use href="#dbl-r"/></svg></button></div>
      <div class="mcell"><i class="grip"></i><svg width="26" height="30" viewBox="0 0 26 30"><path d="M1 0V30" class="s2"/><path fill="currentColor" d="M4 4H18V14H4ZM4 17H26V25H4Z"/></svg></div>
      <div class="mcell"><i class="grip"></i><svg width="26" height="26" viewBox="0 0 26 26"><path fill="currentColor" d="M0 0H16V8H26V26H9V15H0Z"/><path d="M9 8H16V15H9Z" fill="#424242" stroke="#b9b9b9" stroke-width="2"/></svg></div>
    </aside>

    <aside class="panel layers">
      <div class="pbar"><button aria-label="閉じる"><svg width="12" height="12"><use href="#x"/></svg></button><button aria-label="折りたたむ"><svg width="14" height="10"><use href="#dbl-l"/></svg></button></div>
      <div class="tabs"><button class="on tab-n">レイヤー</button><button class="tab-m">リンク</button><span class="fill"><svg width="17" height="12"><use href="#menu"/></svg></span></div>
      <div class="lbody">
        <div class="llist"><div class="lrow"><span class="l-eye"><svg width="20" height="13"><use href="#eye"/></svg></span><span class="l-lock"></span><span class="l-col"><i></i></span><span class="l-thumb"></span><span class="l-name">レイヤー 1</span><span class="l-tgt"><i></i></span><b></b></div></div>
        <div class="lfoot"><span>1 レイ...</span>
          <svg width="20" height="20" viewBox="0 0 20 20" class="dim"><path d="M8 5H1V19H16V12M10 10L18 2M12 1H19V8" class="s2"/></svg>
          <svg width="20" height="20" class="dim"><use href="#glass"/></svg>
          <svg width="20" height="20" viewBox="0 0 20 20" class="dim"><path d="M1 1H14V14H1ZM14 7H19V19H7V14" class="s1"/><path fill="currentColor" d="M6 6H14V14H6Z"/></svg>
          <svg width="26" height="20" viewBox="0 0 26 20" class="dark"><path d="M1 1V7H6M11 3H25V18H11ZM18 7V14M15 10H21" class="s2"/><path fill="currentColor" d="M5 3L10 7L5 11Z"/></svg>
          <svg width="20" height="20" class="dark"><use href="#plusbox"/></svg>
          <svg width="18" height="20" class="dim"><use href="#trash"/></svg>
        </div>
      </div>
      <div class="gripbar"><i class="grip"></i></div>
    </aside>

    <aside class="panel infop">
      <div class="pbar"><button aria-label="閉じる"><svg width="12" height="12"><use href="#x"/></svg></button><button aria-label="折りたたむ"><svg width="14" height="10"><use href="#dbl-l"/></svg></button></div>
      <div class="tabs"><button class="on tab-i"><svg width="10" height="14"><use href="#updown"/></svg>情報</button><span class="fill"><svg width="17" height="12"><use href="#menu"/></svg></span></div>
      <div class="ibody">
        <div class="itop">
          <svg width="22" height="22" viewBox="0 0 22 22"><path d="M11 0V22M0 11H22" class="s2"/></svg>
          <dl><dt>X :</dt><dd>-29.2177 mm</dd><dt>Y :</dt><dd>21.012 mm</dd></dl>
          <div class="izoom"><svg width="18" height="20" viewBox="0 0 18 20"><circle cx="7" cy="7" r="6" class="s2"/><path d="M11 12L17 19" class="s2"/></svg><span>:</span><span class="pct">146 %</span></div>
        </div>
        <hr>
        <div class="ibot"></div>
      </div>
    </aside>
  </main>

  <footer class="status">
    <div class="sleft">
      <div class="combo w112"><input aria-label="ズーム率" value="97.1%"><button class="dd" aria-label="一覧"><svg width="14" height="8"><use href="#down"/></svg></button></div>
      <div class="combo w112"><input aria-label="回転" value="0°"><button class="dd" aria-label="一覧"><svg width="14" height="8"><use href="#down"/></svg></button></div>
      <span class="nav"><svg width="14" height="14" viewBox="0 0 14 14"><path fill="currentColor" d="M0 0H3V14H0ZM14 0V14L5 7Z"/></svg><svg width="8" height="14" viewBox="0 0 8 14"><path fill="currentColor" d="M8 0V14L0 7Z"/></svg></span>
      <div class="combo w95"><input aria-label="アートボード" value="1"><button class="dd" aria-label="一覧"><svg width="14" height="8"><use href="#down"/></svg></button></div>
      <span class="nav"><svg width="8" height="14" viewBox="0 0 8 14"><path fill="currentColor" d="M0 0V14L8 7Z"/></svg><svg width="14" height="14" viewBox="0 0 14 14"><path fill="currentColor" d="M14 0H11V14H14ZM0 0V14L9 7Z"/></svg></span>
      <span class="tool">ズーム</span>
      <button class="play" aria-label="表示項目"><svg width="9" height="14" viewBox="0 0 9 14"><path fill="currentColor" d="M0 0V14L9 7Z"/></svg></button>
    </div>
    <div class="hscroll"><svg width="8" height="14"><use href="#left"/></svg><i></i><svg width="8" height="14"><use href="#right"/></svg></div>
    <div class="corner"></div>
  </footer>
</div>
</body>
</html>
```
FILE: styles.css
```css
* { box-sizing: border-box; }
html, body { margin: 0; height: 100%; }
body {
  display: flex; flex-direction: column; height: 100vh; overflow: hidden;
  font: 20px/24px "Inter", "Noto Sans CJK JP", sans-serif; color: #2e2e2e;
  font-variant-numeric: tabular-nums;
  background: linear-gradient(90deg, #a4868c 0%, #98858f 28%, #908498 48%, #80809a 60%, #69759a 70%, #536790 85%, #4b5f8a 100%);
}
.sprite { position: absolute; width: 0; height: 0; }
svg { display: block; flex: none; overflow: visible; }
.s1 { fill: none; stroke: currentColor; stroke-width: 1.6; }
.s2 { fill: none; stroke: currentColor; stroke-width: 2; }
.s3 { fill: none; stroke: currentColor; stroke-width: 3; }
svg text { fill: currentColor; font-family: "Inter", "Noto Sans CJK JP", sans-serif; }
svg text.slab { font-family: "DejaVu Serif", serif; font-weight: bold; }
svg text.inv { fill: #b9b9b9; font-weight: bold; }
svg text.line-txt { fill: #fff; font-size: 9px; font-weight: bold; text-anchor: middle; }
svg text.badge-txt { fill: #fff; font-size: 14px; text-anchor: middle; }
button, input, select { font: inherit; font-variant-numeric: inherit; color: inherit; margin: 0; padding: 0; border: 0; background: none; border-radius: 0; }
button { display: flex; align-items: center; justify-content: center; }
a { color: inherit; text-decoration: none; }
i { display: block; flex: none; font-style: normal; }
hr { border: 0; height: 2px; margin: 0; flex: none; background: linear-gradient(#b0b0b0 50%, #c0c0c0 50%); }
.dim { color: #a0a0a0; }
.dark { color: #323232; }
.row { display: flex; align-items: center; }

/* system menu bar */
.menubar { flex: none; height: 41px; display: flex; align-items: center; color: #fff; font-size: 21px; padding: 0 4px 3px 32px; }
.menubar svg, .menus { filter: drop-shadow(0 2px 2px rgba(0,0,0,.25)); }
.menus { display: flex; gap: 30px; margin-left: 31px; }
.menus .app { font-weight: 700; font-size: 21px; margin-right: 7px; }
.extras { margin-left: auto; display: flex; align-items: center; gap: 30px; }
.extras .ime { width: 36px; height: 26px; border-radius: 4px; background: #f4f4f6; color: #4a5570; display: grid; place-items: center; font-size: 20px; font-weight: 700; }
.extras .wifi { margin-left: 6px; }
.extras time { font-variant-numeric: normal; margin-left: -6px; }

/* application window */
.window { flex: 1; min-height: 0; display: flex; flex-direction: column; border: 2px solid #959595; border-radius: 12px 12px 0 0; background: #b9b9b9; overflow: hidden; }
.titlebar { flex: none; height: 55px; border-bottom: 2px solid #959595; display: flex; align-items: center; }
.titlebar h1 { margin: 0; font-size: 20px; font-weight: 400; padding-left: 38px; }
.tb-left, .tb-right { flex: 1; display: flex; align-items: center; color: #424242; }
.tb-left { padding-left: 13px; }
.light { width: 20px; height: 20px; border-radius: 50%; margin-right: 13px; }
.red { background: #fe5f58; } .yellow { background: #febb2e; } .green { background: #2ac640; }
.home { margin-left: 10px; }
.vbar { width: 2px; height: 33px; background: #a8a8a8; }
.tb-left .vbar { margin-left: 18px; }
.tb-right { justify-content: flex-end; padding-right: 14px; }
.share { width: 72px; height: 40px; border-radius: 20px; background: #1473e6; color: #fff; font-weight: 500; margin-right: 18px; }
.tb-right .vbar { margin: 0 28px 0 17px; }
.layout { margin-right: 28px; }

/* combined fields */
.combo { display: flex; flex: none; height: 34px; border: 2px solid #a6a6a6; border-radius: 5px; overflow: hidden; background: #c4c4c4; align-items: stretch; color: #222; }
.combo input { flex: 1; min-width: 0; width: 0; background: #e2e2e2; padding: 6px 0 0 5px; outline: 0; }
.combo .dd { width: 30px; border-left: 2px solid #a6a6a6; display: flex; align-items: center; justify-content: center; flex: none; }
.step { width: 30px; border-right: 2px solid #a6a6a6; display: flex; flex-direction: column; justify-content: space-evenly; align-items: center; flex: none; }
.w153 { width: 153px; } .w137 { width: 137px; } .w112 { width: 112px; } .w95 { width: 95px; }
.select { position: relative; display: block; flex: none; height: 34px; border: 2px solid #a6a6a6; border-radius: 5px; background: #c4c4c4; }
.select select { appearance: none; width: 100%; height: 100%; padding: 0 30px 0 11px; display: block; opacity: 1; color: #2e2e2e; }
.select svg { position: absolute; right: 12px; top: 12px; pointer-events: none; }
.w199 { width: 199px; } .w140 { width: 140px; } .w178 { width: 178px; }
.dotted { border-bottom: 2px dotted #444; }

/* control bar */
.control { flex: none; height: 56px; border-bottom: 2px solid #959595; display: flex; align-items: center; gap: 9px; padding-left: 8px; }
.dots { width: 2px; height: 31px; background: repeating-linear-gradient(#999 0 2px, transparent 2px 4px); margin-right: 4px; }
.selstate { width: 195px; }
.combo.sw { width: 63px; }
.paper { flex: 1; background: #fff; display: flex; align-items: center; color: #000; }
.ink { flex: 1; background: #fff; display: grid; place-items: center; box-shadow: inset 0 0 0 14px #231c16; margin: 2px 0 2px 1px; }
.ink i { width: 11px; height: 11px; border: 2px solid #fff; background: #b9b9b9; outline: 1px solid #fff; box-shadow: inset 0 0 0 1px #555; }
.c-stroke { width: 31px; margin-left: 12px; white-space: nowrap; }
.profile { width: 177px; } .brush { width: 172px; margin-left: 2px; }
.rule { width: 83px; height: 4px; background: #000; margin: 0 8px 0 11px; }
.dot { width: 9px; height: 9px; border-radius: 50%; background: #000; margin: 0 20px 0 12px; }
.c-opacity { width: 90px; margin-left: 3px; white-space: nowrap; }
.c-style { width: 85px; margin: 0 3px 0 1px; white-space: nowrap; }
.outline { height: 33px; border: 2px solid #959595; border-radius: 5px; color: #222; }
.docset { width: 189px; margin-left: 12px; } .prefs { width: 136px; }
.pick { margin-left: 8px; color: #424242; }
.c-right { margin-left: auto; display: flex; align-items: center; padding-right: 26px; color: #424242; }
.magnet { margin-left: 17px; }
.more-dd { margin-left: 11px; }
.lines { margin-left: 30px; }

/* document tabs */
.doctabs { flex: none; height: 48px; border-bottom: 2px solid #959595; background: #a2a2a2; display: flex; font-size: 18px; color: #686868; }
.doctabs a { display: flex; align-items: center; gap: 14px; padding-left: 12px; border-right: 2px solid #959595; white-space: nowrap; overflow: hidden; }
.doctabs svg { color: #444; }
.doctabs .on { background: #b9b9b9; color: #333; }
.t1 { width: 743px; } .t2 { width: 611px; } .t3 { width: 547px; } .t4 { width: 426px; } .t5 { width: 435px; }

/* workspace */
.workspace { flex: 1; min-height: 0; position: relative; display: flex; background: #fff; }
.canvas { flex: 1; display: grid; place-items: center; }
.artboard { height: calc(100% - 114px); aspect-ratio: 210 / 297; border: 2px solid #333; }
.vscroll { width: 26px; background: #c4c4c4; display: flex; flex-direction: column; align-items: center; justify-content: space-between; padding: 8px 0; color: #666; }
.vscroll i { position: relative; z-index: 1; width: 24px; height: 40px; border-radius: 10px; background: #999; }
.edge { position: absolute; right: 0; top: 190px; bottom: 130px; width: 60px; pointer-events: none; background: linear-gradient(to left, rgba(0,0,0,.24), rgba(0,0,0,.05) 26px, transparent); mask-image: linear-gradient(transparent, #000 120px, #000 calc(100% - 200px), transparent); }

/* floating panels */
.panel { position: absolute; display: flex; flex-direction: column; background: #b9b9b9; border: 2px solid #959595; border-radius: 8px 8px 0 0; box-shadow: 2px 4px 12px rgba(0,0,0,.3); color: #2e2e2e; }
.pbar { flex: none; height: 21px; background: #a2a2a2; border-bottom: 2px solid #959595; display: flex; align-items: center; justify-content: space-between; padding: 2px 9px 0 7px; border-radius: 6px 6px 0 0; color: #484848; }
.dock .pbar, .toolbox .pbar { height: 22px; }
.tabs { flex: none; height: 44px; display: flex; font-size: 18px; background: #a2a2a2; }
.tabs button { border-right: 2px solid #959595; border-bottom: 2px solid #959595; color: #6a6a6a; gap: 6px; }
.tabs button.on { background: #b9b9b9; color: #3a3a3a; border-bottom-color: #b9b9b9; }
.tabs .fill { flex: 1; border-bottom: 2px solid #959595; display: flex; align-items: center; justify-content: flex-end; padding-right: 9px; color: #484848; }
.tab-s { width: 64px; } .tab-i { width: 75px; } .tab-m { width: 83px; } .tab-n { width: 101px; } .tab-l { width: 137px; } .tab-xl { width: 165px; }
.grip { width: 31px; height: 7px; background: repeating-linear-gradient(90deg, #999 0 2px, transparent 2px 3px); }
.gripbar { height: 12px; flex: none; border-top: 3px solid #959595; display: flex; justify-content: center; padding-top: 1px; }

.dock { left: 0; top: -2px; width: 458px; border-left: 0; border-top: 0; }
.sec { border-top: 2px solid #959595; border-bottom: 2px solid #959595; margin-top: 2px; }
.sec.first { border-top: 0; margin-top: 0; }
.sec.last { border-bottom: 0; }
.body { padding: 10px 8px; display: flex; flex-direction: column; }

.transp { padding-bottom: 8px; }
.oplab { width: 103px; padding-left: 8px; white-space: nowrap; }
.transp hr { margin-top: 9px; }
.mask { display: flex; gap: 8px; margin: 9px 0 4px; }
.preview { width: 222px; height: 92px; border: 2px solid #a6a6a6; border-radius: 5px; margin-top: 3px; }
.maskcol { display: flex; flex-direction: column; gap: 11px; align-items: flex-start; }
.flat { width: 145px; height: 34px; border-radius: 4px; background: #afafaf; color: #a0a0a0; margin-bottom: -1px; }
.chk { display: flex; align-items: center; gap: 9px; height: 20px; color: #000; white-space: nowrap; }
.chk.off { color: #a0a0a0; }
.chk input { appearance: none; width: 19px; height: 20px; border: 2px solid #444; border-radius: 4px; flex: none; }
.chk.off input { border-color: #909090; }
.checks { display: flex; gap: 8px; margin: 11px 0 2px 1px; }

.alist { list-style: none; margin: 0; padding: 0; height: 601px; border: 2px solid #a6a6a6; border-radius: 5px; color: #000; }
.alist li { display: flex; align-items: center; height: 41px; border-bottom: 2px solid #a6a6a6; }
.alist .head { height: 42px; padding-left: 3px; }
.thumb { width: 32px; height: 32px; background: #fff; border: 2px solid #444; padding: 1px; margin-right: 47px; }
.thumb i { height: 26px; border: 1px solid #777; }
.eye { width: 41px; height: 100%; border-right: 2px solid #777; display: grid; place-items: center; color: #424242; padding-right: 3px; }
.eye.pale { color: #999; }
.tw { width: 41px; padding-left: 10px; color: #333; }
.tw.deep { width: 79px; }
.lab { width: 110px; } .lab2 { width: 135px; }
.alist a { color: #333; }
.chip { width: 28px; height: 29px; background: #fff; border: 2px solid #555; box-shadow: inset 0 0 0 1px #fff, inset 0 0 0 3px #444; margin-right: 25px; }
.chip.black { background: #1f1a15; box-shadow: inset 0 0 0 1px #fff, inset 0 0 0 3px #444, inset 0 0 0 5px #fff; }
.afoot { display: flex; align-items: center; height: 31px; padding: 0 37px 0 11px; margin-bottom: -10px; color: #424242; gap: 24px; }
.fx { font-style: italic; font-size: 22px; }
.fx i { border: 3px solid transparent; border-top: 4px solid currentColor; margin-top: 14px; }
.afoot .push { margin-left: auto; }

.grad { padding-top: 9px; }
.gtop { display: flex; justify-content: flex-start; }
.gleft { width: 65px; display: flex; flex-direction: column; }
.gsw { width: 52px; height: 52px; border: 2px solid #444; background: linear-gradient(90deg, #fff, #231c19); }
.tri { border: 4px solid transparent; border-top: 5px solid #333; border-bottom: 0; margin-left: 6px; }
.fs { position: relative; width: 49px; height: 49px; margin: 8px 0 18px; }
.fs-fill { position: absolute; left: 0; top: 0; width: 32px; height: 32px; background: #fff; border: 2px solid #555; }
.fs-stroke { position: absolute; right: 0; bottom: 0; width: 33px; height: 33px; background: #b9b9b9; border: 2px solid #555; box-shadow: inset 0 0 0 2px #fff, inset 0 0 0 7px #1f1a15, inset 0 0 0 9px #fff, inset 0 0 0 11px #555; }
.gleft > svg { margin-left: 8px; }
.gright { display: flex; flex-direction: column; gap: 9px; }
.grow { display: flex; align-items: center; gap: 5px; }
.glab { width: 87px; display: flex; justify-content: flex-end; white-space: nowrap; }
.glab.off { color: #a0a0a0; } .glab.mid { color: #808080; }
.seg { display: flex; border: 2px solid #a6a6a6; border-radius: 4px; height: 35px; }
.seg button { width: 36px; border-right: 2px solid #a6a6a6; }
.seg.big { height: 39px; } .seg.big button { width: 39px; }
.seg button:last-child { border-right: 0; }
.select.void { width: 137px; border-color: #aeaeae; background: #aeaeae; color: #949494; }
.gbarrow { display: flex; align-items: center; margin: 32px 0; padding-left: 15px; gap: 25px; }
.gbar { width: 372px; height: 26px; border: 2px solid #444; background: linear-gradient(90deg, #fff, #c4c4c6 35%, #999 52%, #555 80%, #1f1a15); }
.gbot { display: flex; align-items: center; padding-left: 10px; gap: 27px; margin-bottom: -3px; }

.chars { padding-top: 11px; gap: 9px; padding-bottom: 9px; }
.font { width: 402px; }
.font input, .style input { padding: 0 0 0 8px; }
.style { margin-top: -1px; }
.find { width: 34px; background: #e2e2e2; display: flex; align-items: center; gap: 1px; padding-left: 2px; color: #424242; }
.crow { display: flex; align-items: center; }
.tight { margin-top: -1px; }
.ci { width: 35px; color: #424242; }
.ci.r { margin-left: auto; } .ci.narrow { width: 26px; }
.caps { display: flex; align-items: center; height: 22px; padding: 0 10px 0 6px; font: bold 22px/22px "DejaVu Serif", serif; color: #424242; }
.caps button { font-weight: 700; height: 22px; }
.caps small { font-size: 16px; line-height: 18px; align-self: flex-end; }
.caps sup, .caps sub { font-size: 12px; line-height: 12px; }
.caps sup { align-self: flex-start; } .caps sub { align-self: flex-end; }
.b2 { margin-left: 18px; } .b3 { margin-left: 100px; } .b4 { margin-left: 20px; } .b5 { margin-left: auto; } .b6 { margin-left: 30px; }
.under { text-decoration: underline; text-decoration-thickness: 2px; text-underline-offset: 4px; }
.strike { text-decoration: line-through; text-decoration-thickness: 2px; }
.lang { justify-content: space-between; }
.aa { margin-left: 36px; display: flex; font-weight: 500; color: #424242; }
.aa sub { font-size: 20px; line-height: 36px; vertical-align: baseline; }
.snap { display: flex; align-items: center; height: 40px; padding-right: 8px; margin-bottom: 6px; }
.snap svg { color: #424242; }
.snap svg:first-of-type { margin-left: auto; }
.snap .info { margin-left: 29px; }
.glyphs { display: flex; align-items: center; height: 42px; color: #919191; }
.bare span { width: 26px; height: 26px; border: 2px solid #a0a0a0; color: #a0a0a0; display: grid; place-items: center; font-size: 18px; }
.bare { margin-left: 8px; }
.bare.cut { margin-left: 38px; background: linear-gradient(#a0a0a0, #a0a0a0) center / 28px 2px no-repeat; }
.boxed { width: 42px; height: 42px; border: 2px solid #858585; border-radius: 5px; background: #afafaf; margin-left: 42px; }
.boxed.x2 { margin-left: 35px; } .boxed.x3 { margin-left: auto; }
.glyphs i { width: 2px; height: 42px; background: linear-gradient(90deg, #b0b0b0 50%, #c0c0c0 50%); margin: 0 -6px 0 36px; }

/* tool box */
.toolbox { left: 458px; top: -2px; width: 119px; border-top: 0; align-items: center; border-bottom: 0; height: 888px; color: #424242; }
.toolbox .pbar { align-self: stretch; }
.toolbox > .grip { margin: 4px 0 19px; }
.tools { display: grid; grid-template: repeat(14, 1fr) / 48px 48px; column-gap: 2px; height: 551px; flex: none; }
.tools button { position: relative; }
.tools svg { width: 30px; height: 30px; }
.fly::after { content: ""; position: absolute; right: 3px; bottom: 5px; border: 3px solid transparent; border-right-color: #222; border-bottom-color: #222; }
.slabT { font: bold 32px/32px "DejaVu Serif", serif; }
.picked { background: #989898; border: 2px solid #8a8a8a; border-radius: 5px; }
.paint { position: relative; width: 97px; height: 89px; margin-top: 11px; flex: none; }
.p-fill { position: absolute; left: 0; top: 0; width: 59px; height: 59px; background: #fff; border: 2px solid #555; }
.p-stroke { position: absolute; left: 30px; top: 30px; width: 59px; height: 59px; background: #adadad; border: 2px solid #555; box-shadow: inset 0 0 0 2px #fff, inset 0 0 0 12px #231c19, inset 0 0 0 14px #fff, inset 0 0 0 16px #555; }
.p-swap { position: absolute; right: 6px; top: 1px; }
.p-def { position: absolute; left: 0; bottom: 2px; }
.tri-seg { display: flex; width: 97px; height: 34px; border: 2px solid #a6a6a6; border-radius: 3px; margin-top: 10px; flex: none; }
.tri-seg.short { height: 31px; margin-top: 7px; }
.tri-seg button { flex: 1; border-right: 2px solid #a6a6a6; }
.tri-seg button:last-child { border-right: 0; }
.tri-seg .on { background: #979797; border-color: #979797; }
.mini { width: 22px; height: 22px; border: 2px solid #000; }
.white { background: #fff; } .gr { background: linear-gradient(90deg, #fff, #333); }
.none { background: linear-gradient(to bottom right, #fff 42%, #e8141a 42% 58%, #fff 58%); }
.screens { margin-top: 13px; }
.more { gap: 4px; margin-top: 36px; }
.more i { width: 7px; height: 7px; border-radius: 50%; background: #424242; }

.mini-dock { left: 490px; top: 935px; width: 64px; color: #424242; }
.mini-dock .pbar { padding: 2px 10px 0 7px; }
.mcell { height: 66px; display: flex; flex-direction: column; align-items: center; padding-top: 5px; gap: 12px; }
.mcell + .mcell { border-top: 2px solid #959595; gap: 14px; }

/* layers */
.layers { right: 85px; top: 40px; width: 484px; }
.lbody { padding: 11px 8px 0; }
.llist { height: 451px; border: 2px solid #a6a6a6; border-radius: 4px; }
.lrow { position: relative; display: flex; align-items: center; height: 35px; background: #98a5c1; border-bottom: 2px solid #a6a6a6; color: #000; }
.lrow span { height: 100%; display: flex; align-items: center; }
.l-eye { width: 34px; justify-content: center; border-right: 2px solid #a3a9b6; color: #3c4252; }
.l-lock { width: 35px; border-right: 2px solid #a3a9b6; }
.l-col { width: 9px; border-right: 2px solid #a3a9b6; }
.l-col i { width: 6px; height: 29px; background: #4f7fff; }
.lrow .l-thumb { width: 29px; height: 29px; background: #fff; border: 2px solid #000; margin: 0 10px 0 40px; }
.l-name { flex: 1; }
.l-tgt { width: 58px; border-left: 2px solid #a3a9b6; padding-left: 9px; }
.l-tgt i { width: 14px; height: 14px; border: 2px solid #3c4a62; border-radius: 50%; }
.lrow b { position: absolute; right: 0; top: 0; border: 5px solid #222; border-left-color: transparent; border-bottom-color: transparent; }
.lfoot { display: flex; align-items: center; height: 32px; gap: 22px; padding-right: 37px; }
.lfoot span { margin-right: auto; padding-left: 1px; }

/* info */
.infop { right: 62px; bottom: 33px; width: 605px; }
.ibody { padding: 5px 8px 8px; }
.itop { display: flex; align-items: center; height: 69px; }
.itop dl { margin: 0; display: grid; grid-template-columns: 36px auto; row-gap: 9px; padding-left: 8px; width: 276px; border-right: 1px solid #b2b2b2; }
.itop dd { margin: 0; }
.izoom { display: flex; align-self: flex-start; padding: 6px 0 0 40px; }
.pct { margin-left: 17px; }
.ibody hr { margin-top: 5px; }
.ibot { height: 34px; }

/* status bar */
.status { flex: none; height: 26px; display: flex; overflow: hidden; align-items: stretch; }
.sleft { display: flex; width: 827px; background: #aeaeae; border-top: 1px solid #a2a2a2; padding-left: 6px; gap: 8px; align-items: flex-start; }
.sleft .combo { border-top-width: 1px; }
.sleft input { padding-top: 3px; }
.nav { display: flex; gap: 17px; width: 52px; height: 25px; align-items: center; justify-content: center; color: #8e8e8e; }
.tool { flex: 1; height: 25px; border-left: 2px solid #bcbcbc; border-right: 2px solid #bcbcbc; text-align: center; font-size: 18px; line-height: 30px; }
.play { width: 21px; height: 25px; justify-content: flex-start; padding-left: 2px; color: #424242; }
.hscroll { flex: 1; background: #c4c4c4; display: flex; align-items: center; justify-content: space-between; padding: 0 10px; color: #666; }
.hscroll i { width: 42px; height: 24px; border-radius: 12px; background: #999; }
.corner { width: 26px; background: #adadad; }
```
